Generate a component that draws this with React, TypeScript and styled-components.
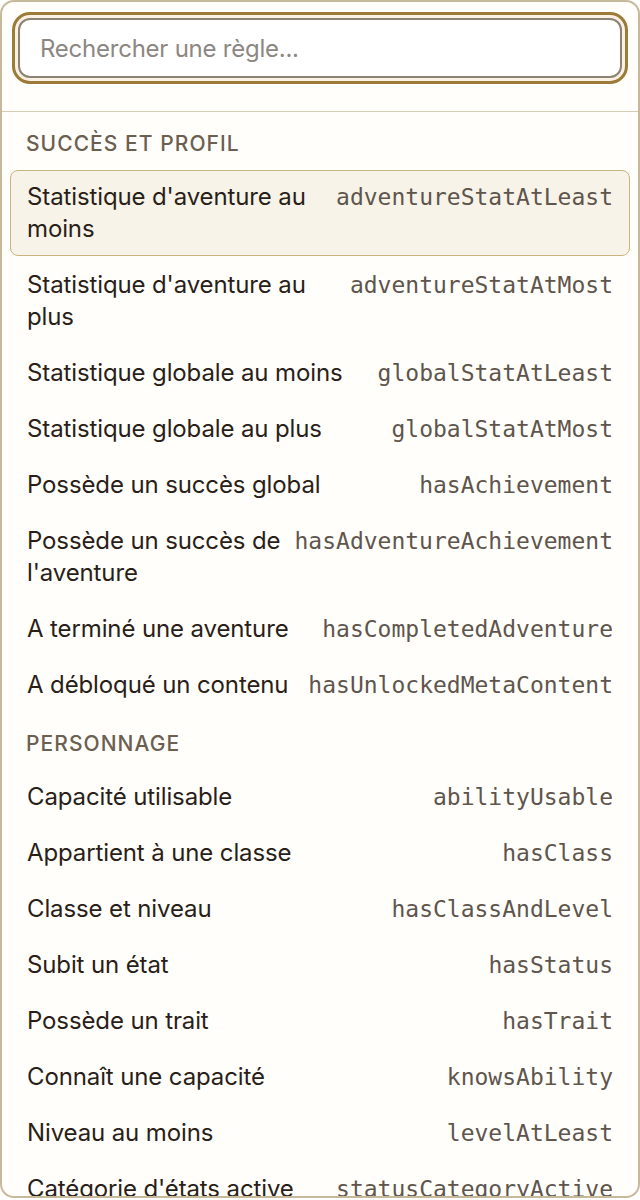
import styled, { createGlobalStyle } from "styled-components";
import { useState } from "react";

const GlobalStyle = createGlobalStyle`
    html, body {
        margin: 0;
        padding: 0;
        background: #ffffff;
    }
    body {
        font-family: Inter, "Noto Sans", sans-serif;
    }
    * {
        box-sizing: border-box;
    }
`;

const Panel = styled.div`
    width: 640px;
    height: 1198px;
    border: 2px solid #c7ba9b;
    border-radius: 14px;
    background: #fffefb;
    overflow: hidden;
    display: flex;
    flex-direction: column;
`;

const SearchBar = styled.div`
    padding: 16px 16px 33px;
    border-bottom: 1px solid #d6ccb3;
`;

const SearchInput = styled.input`
    display: block;
    width: 100%;
    height: 60px;
    padding: 0 20px;
    border: 2px solid #8b8373;
    border-radius: 12px;
    background: #ffffff;
    font-family: Inter, "Noto Sans", sans-serif;
    font-size: 24px;
    letter-spacing: -0.01em;
    color: #2b2019;
    box-shadow: 0 0 0 3px #fbf1e2, 0 0 0 6px #9c7b39;
    outline: none;

    &::placeholder {
        color: #8c8782;
    }
`;

const List = styled.div`
    padding: 0 8px;
    display: flex;
    flex-direction: column;
`;

const SectionTitle = styled.div`
    padding: 20px 16px 12px;
    line-height: 24px;
    font-size: 21px;
    font-weight: 500;
    letter-spacing: 0.05em;
    text-transform: uppercase;
    color: #6b5f50;
`;

const Row = styled.div<{ $active?: boolean }>`
    display: flex;
    justify-content: space-between;
    align-items: flex-start;
    gap: 12px;
    margin-top: 2px;
    padding: 10px 16px;
    border: 1px solid ${p => (p.$active ? "#c9b37f" : "transparent")};
    border-radius: 8px;
    background: ${p => (p.$active ? "#f8f3e8" : "transparent")};
    cursor: pointer;
`;

const Label = styled.span`
    font-size: 24px;
    line-height: 32px;
    letter-spacing: -0.005em;
    color: #2a1f18;
`;

const Key = styled.span`
    font-family: "DejaVu Sans Mono", "Liberation Mono", monospace;
    font-size: 23px;
    line-height: 32px;
    color: #5e554c;
    white-space: nowrap;
`;

const sections = [
    {
        title: "Succès et profil",
        rules: [
            ["Statistique d'aventure au moins", "adventureStatAtLeast"],
            ["Statistique d'aventure au plus", "adventureStatAtMost"],
            ["Statistique globale au moins", "globalStatAtLeast"],
            ["Statistique globale au plus", "globalStatAtMost"],
            ["Possède un succès global", "hasAchievement"],
            ["Possède un succès de l'aventure", "hasAdventureAchievement"],
            ["A terminé une aventure", "hasCompletedAdventure"],
            ["A débloqué un contenu", "hasUnlockedMetaContent"],
        ],
    },
    {
        title: "Personnage",
        rules: [
            ["Capacité utilisable", "abilityUsable"],
            ["Appartient à une classe", "hasClass"],
            ["Classe et niveau", "hasClassAndLevel"],
            ["Subit un état", "hasStatus"],
            ["Possède un trait", "hasTrait"],
            ["Connaît une capacité", "knowsAbility"],
            ["Niveau au moins", "levelAtLeast"],
            ["Catégorie d'états active", "statusCategoryActive"],
            ["Niveau au plus", "levelAtMost"],
        ],
    },
];

function App() {
    const [query, setQuery] = useState("");
    const [active, setActive] = useState("adventureStatAtLeast");

    return (
        <>
            <GlobalStyle />
            <Panel>
                <SearchBar>
                    <SearchInput
                        placeholder="Rechercher une règle..."
                        value={query}
                        onChange={e => setQuery(e.target.value)}
                    />
                </SearchBar>
                <List>
                    {sections.map(section => (
                        <div key={section.title}>
                            <SectionTitle>{section.title}</SectionTitle>
                            {section.rules.map(([label, key]) => (
                                <Row key={key} $active={active === key} onMouseEnter={() => setActive(key)}>
                                    <Label>{label}</Label>
                                    <Key>{key}</Key>
                                </Row>
                            ))}
                        </div>
                    ))}
                </List>
            </Panel>
        </>
    );
}

export default App;
